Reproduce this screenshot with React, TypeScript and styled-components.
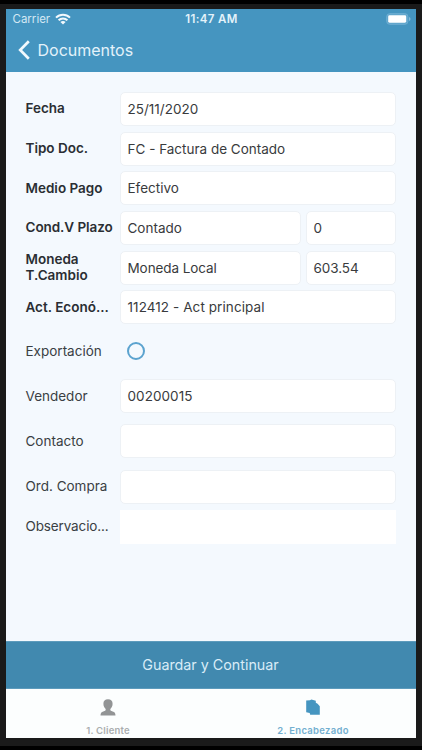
import React from "react";
import styled, { createGlobalStyle } from "styled-components";

const GlobalStyle = createGlobalStyle`
  * { box-sizing: border-box; }
  body { margin: 0; background: #000; }
  #root { font-family: Inter, "Liberation Sans", sans-serif; }
`;

const Device = styled.div`
  width: 422px;
  height: 750px;
  padding: 4px 0;
  background: #000;
  overflow: hidden;
`;

const Bezel = styled.div`
  height: 742px;
  padding: 5px 6.5px 9px 5.5px;
  background: #1a1a1a;
`;

const Screen = styled.main`
  height: 728.5px;
  display: flex;
  flex-direction: column;
  background: #f4f9fe;
  overflow: hidden;
`;

const Header = styled.header`
  height: 63px;
  flex: none;
  background: #4595c0;
  color: #e3f2fa;
`;

const StatusBar = styled.div`
  height: 20px;
  padding: 0 5px 0 7px;
  display: grid;
  grid-template-columns: 1fr auto 1fr;
  align-items: center;
  font-size: 11.5px;
  line-height: 20px;
`;

const Carrier = styled.div`
  display: flex;
  align-items: center;
  gap: 5px;
  color: #d3e8f4;
`;

const Clock = styled.div`
  font-weight: 600;
  font-size: 11.5px;
  letter-spacing: 0.4px;
`;

const BatterySlot = styled.div`
  display: flex;
  justify-content: flex-end;
`;

const NavBar = styled.div`
  height: 42px;
  display: flex;
  align-items: center;
  gap: 8px;
  padding: 0 0 0 12px;
  font-size: 16px;
`;

const Form = styled.section`
  flex: 1;
  padding: 17px 19.5px 0 20px;
`;

const Row = styled.div<{ $height: number }>`
  height: ${(p) => p.$height}px;
  display: grid;
  grid-template-columns: 94.5px 1fr;
  align-items: center;
`;

const Label = styled.div<{ $strong?: boolean; $spacing?: number }>`
  width: 90px;
  margin-top: -1px;
  color: ${(p) => (p.$strong ? "#2a2e33" : "#3a3f44")};
  font-size: 13.5px;
  line-height: 16px;
  font-weight: ${(p) => (p.$strong ? 600 : 400)};
  letter-spacing: ${(p) => p.$spacing ?? 0}px;
  white-space: pre;
`;

const Fields = styled.div<{ $split: boolean }>`
  display: grid;
  grid-template-columns: ${(p) => (p.$split ? "181px 90px" : "1fr")};
  gap: 5px;
`;

const Field = styled.div<{ $plain?: boolean; $spacing?: number }>`
  height: 34px;
  padding: 0 6.5px;
  background: #fff;
  border: 1px solid ${(p) => (p.$plain ? "#fff" : "#edf1f5")};
  border-radius: ${(p) => (p.$plain ? 0 : 5)}px;
  color: #393b3d;
  font-size: 13.5px;
  line-height: 33px;
  letter-spacing: ${(p) => p.$spacing ?? 0}px;
  white-space: pre;
`;

const Radio = styled.span`
  width: 18px;
  height: 18px;
  margin-left: 7px;
  border: 2px solid #5ba3cf;
  border-radius: 50%;
`;

const Submit = styled.div`
  height: 48px;
  flex: none;
  background: #4189af;
  border-top: 1px solid #5d9bbc;
  border-bottom: 1px solid #5d9bbc;
  color: #d9ecf7;
  font-size: 14.3px;
  line-height: 46px;
  text-align: center;
`;

const Tabs = styled.nav`
  height: 48.5px;
  flex: none;
  display: grid;
  grid-template-columns: 1fr 1fr;
  background: #fcfefe;
`;

const Tab = styled.div<{ $active?: boolean }>`
  display: flex;
  flex-direction: column;
  align-items: center;
  padding-top: 10px;
  color: ${(p) => (p.$active ? "#4595c0" : "#929495")};
`;

const TabLabel = styled.span<{ $active?: boolean }>`
  margin-top: 9px;
  font-size: 9.5px;
  line-height: 12px;
  font-weight: 600;
  letter-spacing: ${(p) => (p.$active ? 0.3 : 0.2)}px;
  color: ${(p) => (p.$active ? "#73afd0" : "#aaadae")};
`;

const WifiIcon = () => (
  <svg width="16" height="12" viewBox="0 0 16 12" fill="none" stroke="#f2f9fd" strokeWidth="2">
    <path d="M1 4.6C5 .7 11 .7 15 4.6M3.6 7.3C6.1 4.9 9.9 4.9 12.4 7.3" />
    <path d="M5.4 9C6.9 7.6 9.1 7.6 10.6 9L8 11.6Z" fill="#f2f9fd" stroke="none" />
  </svg>
);

const BatteryIcon = () => (
  <svg width="25" height="12" viewBox="0 0 25 12">
    <rect x="0.7" y="0.7" width="21.2" height="10.6" rx="3" fill="#5ea4cb" stroke="#6eaed2" />
    <rect x="2.2" y="2.3" width="18" height="7.4" rx="1.4" fill="#fff" />
    <path d="M23 4v4Q24.6 7.4 24.6 6T23 4Z" fill="#82b9d7" />
  </svg>
);

const BackIcon = () => (
  <svg width="12" height="20" viewBox="0 0 12 20" fill="none" stroke="#f2f9fd" strokeWidth="2.7">
    <path d="M10.8 1.3L2.2 10L10.8 18.7" />
  </svg>
);

const PersonIcon = () => (
  <svg width="16" height="17" viewBox="0 0 16 17" fill="currentColor">
    <path d="M8 .3C5 .3 3.4 2 3.4 4.7C3.4 7 4.4 8.8 5.7 10C5.8 11.5 5.1 12 3.3 12.5C1.3 13 .6 14 .5 16.5H15.5C15.4 14 14.7 13 12.7 12.5C10.9 12 10.2 11.5 10.3 10C11.6 8.8 12.6 7 12.6 4.7C12.6 2 11 .3 8 .3Z" />
  </svg>
);

const CopyIcon = () => (
  <svg width="16" height="17" viewBox="0 0 16 17" fill="currentColor">
    <path d="M1.2 1.4L5 1.2L6.4 .4L10.8 1.7V3.8L12.6 4.7L14.8 7.2V15.7H5.2L4.7 14L1.2 13.3Z" />
  </svg>
);

interface FormRow {
  label: string;
  values: string[];
  height?: number;
  strong?: boolean;
  radio?: boolean;
  plain?: boolean;
  labelSpacing?: number;
  valueSpacing?: number;
}

const rows: FormRow[] = [
  { label: "Fecha", values: ["25/11/2020"], strong: true },
  { label: "Tipo Doc.", values: ["FC - Factura de Contado"], strong: true },
  { label: "Medio Pago", values: ["Efectivo"], strong: true },
  { label: "Cond.V Plazo", values: ["Contado", "0"], strong: true, labelSpacing: -0.07 },
  { label: "Moneda\nT.Cambio", values: ["Moneda Local", "603.54"], strong: true, valueSpacing: -0.08 },
  { label: "Act. Econó...", values: ["112412 - Act principal"], strong: true, valueSpacing: 0.08 },
  { label: "Exportación", values: [], height: 48, radio: true },
  { label: "Vendedor", values: ["00200015"], height: 42, valueSpacing: 0.06 },
  { label: "Contacto", values: [""], height: 48.5 },
  { label: "Ord. Compra", values: [""], height: 42 },
  { label: "Observacio...", values: [""], height: 38, plain: true, labelSpacing: -0.13 },
];

export default function App() {
  return (
    <Device>
      <GlobalStyle />
      <Bezel>
        <Screen>
          <Header>
            <StatusBar>
              <Carrier>Carrier <WifiIcon /></Carrier>
              <Clock>11:47 AM</Clock>
              <BatterySlot><BatteryIcon /></BatterySlot>
            </StatusBar>
            <NavBar><BackIcon />Documentos</NavBar>
          </Header>
          <Form>
            {rows.map((row) => (
              <Row key={row.label} $height={row.height ?? 39.7}>
                <Label $strong={row.strong} $spacing={row.labelSpacing}>{row.label}</Label>
                {row.radio ? (
                  <Radio />
                ) : (
                  <Fields $split={row.values.length > 1}>
                    {row.values.map((value, i) => (
                      <Field key={i} $plain={row.plain} $spacing={row.valueSpacing}>{value}</Field>
                    ))}
                  </Fields>
                )}
              </Row>
            ))}
          </Form>
          <Submit>Guardar y Continuar</Submit>
          <Tabs>
            <Tab><PersonIcon /><TabLabel>1. Cliente</TabLabel></Tab>
            <Tab $active><CopyIcon /><TabLabel $active>2. Encabezado</TabLabel></Tab>
          </Tabs>
        </Screen>
      </Bezel>
    </Device>
  );
}
